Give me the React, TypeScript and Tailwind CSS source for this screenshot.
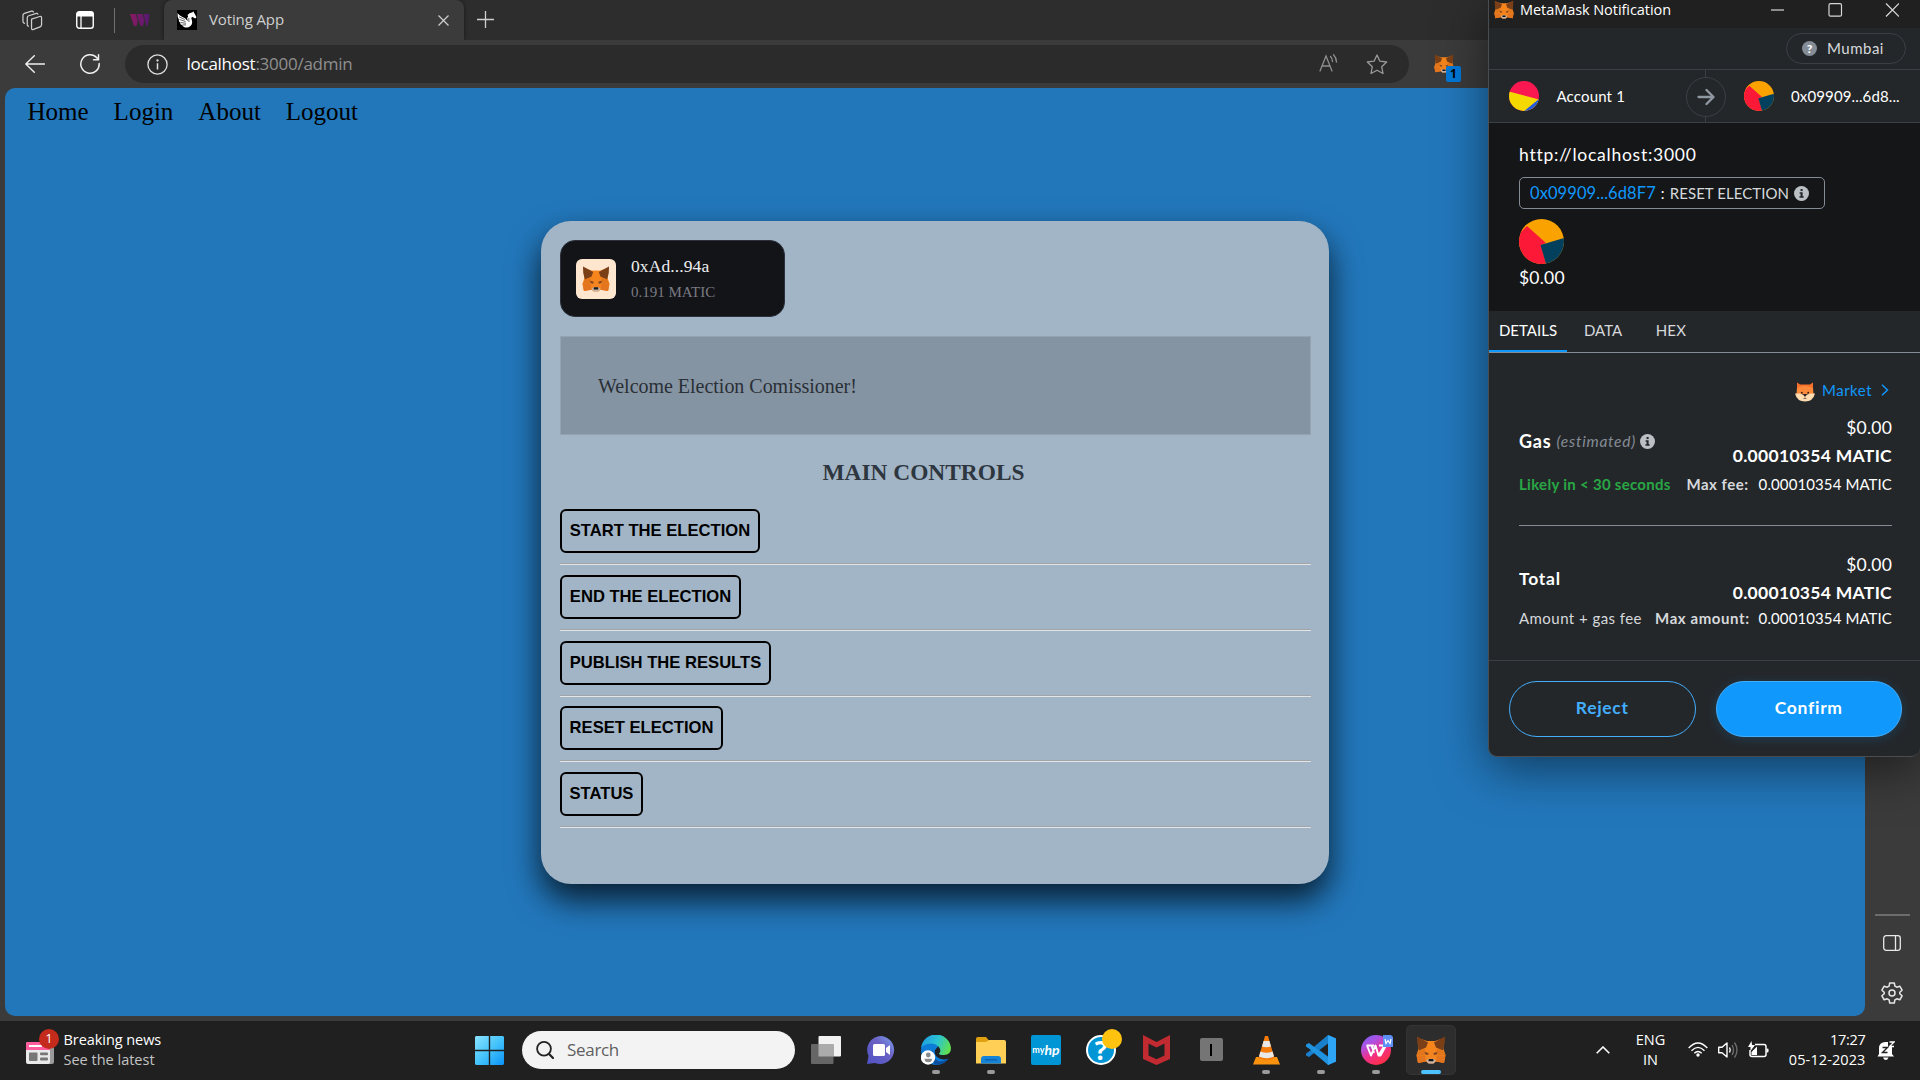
import React from "react";

const segoe = "font-['Open_Sans',sans-serif] whitespace-nowrap";
const serif = "font-['Liberation_Serif',serif] whitespace-nowrap";

function Fox({ className = "" }: { className?: string }) {
  return (
    <svg viewBox="0 0 30 28" className={className}>
      <path d="M2 2 L11 5 H19 L28 2 L27.500 13 L29.500 19 L28 27 L20 25.500 L17.500 27.500 H12.500 L10 25.500 L2 27 L0.500 19 L2.500 13 Z" fill="#f3841f" />
      <path d="M11 5 H19 L17.500 15 H12.500 Z" fill="#f6851b" />
      <path d="M1 0.500 L12 6.500 L10 11.500 L3 14.500 Q0.500 7 1 0.500 Z" fill="#7a3f17" />
      <path d="M29 0.500 L18 6.500 L20 11.500 L27 14.500 Q29.500 7 29 0.500 Z" fill="#7a3f17" />
      <path d="M3 14.500 L8.500 12.500 L11 19 L0.500 19 Z" fill="#e2761b" />
      <path d="M27 14.500 L21.500 12.500 L19 19 L29.500 19 Z" fill="#e2761b" />
      <path d="M0.500 19.500 H9 L10 25.500 L2 27 Z" fill="#e4751f" />
      <path d="M29.500 19.500 H21 L20 25.500 L28 27 Z" fill="#e4751f" />
      <path d="M8.500 16 L12.500 17 L12 19 L9.500 18.200 Z" fill="#7a4424" />
      <path d="M21.500 16 L17.500 17 L18 19 L20.500 18.200 Z" fill="#7a4424" />
      <path d="M10 24.500 L12.500 22.800 H17.500 L20 24.500 L17.500 27.500 H12.500 Z" fill="#c9b5a8" />
      <path d="M12.700 23 H17.300 L17.500 25.300 H12.500 Z" fill="#161616" />
    </svg>
  );
}

function PieAvatar({ className = "" }: { className?: string }) {
  return (
    <svg viewBox="0 0 45 45" className={className}>
      <defs>
        <clipPath id="pieClip">
          <circle cx="22.500" cy="22.500" r="22.500" />
        </clipPath>
      </defs>
      <g clipPath="url(#pieClip)">
        <rect width="45" height="45" fill="#faa300" />
        <path d="M8 7 L27 24 L22 26 L27 45 H0 V0 Z" fill="#fc1937" />
        <path d="M8 7 L0 15 V0 H10 Z" fill="#faa300" />
        <path d="M21.500 26 L45 19 V45 H27 Z" fill="#03405d" />
      </g>
    </svg>
  );
}

function InfoDot({ className = "" }: { className?: string }) {
  return (
    <svg viewBox="0 0 16 16" className={className}>
      <circle cx="8" cy="8" r="8" fill="#bbc0c5" />
      <rect x="7" y="3.200" width="2.200" height="2.200" fill="#24272a" />
      <path d="M6 6.700 H9.200 V11 H10.300 V12.500 H5.800 V11 H7 V8.200 H6 Z" fill="#24272a" />
    </svg>
  );
}

function TabStrip() {
  return (
    <div className="flex h-10 items-center bg-[#2d2d2d] text-[#cfcfcf]">
      <svg viewBox="0 0 22 22" className="ml-[22px] h-[21px] w-[21px] shrink-0" fill="none" stroke="#cfcfcf" strokeWidth="1.300" strokeLinejoin="round" strokeLinecap="round">
        <path d="M10 9.500 L18.500 6.800 Q20.500 6.200 20.500 8 V15.500 Q20.500 17 19 17.600 L12 20.300 Q10 21 10 19 Z" />
        <path d="M6.800 17 Q5.500 17 5.500 15.500 V8 Q5.500 6.500 7 6 L15 3.500 Q16.300 3.200 16.600 4.300" />
        <path d="M2.600 14 Q1 13.500 1 12 V5.500 Q1 4 2.500 3.500 L10 1.200 Q11.500 0.900 12 2" />
      </svg>
      <svg viewBox="0 0 18 18" className="ml-[33px] h-[18px] w-[18px] shrink-0" fill="none">
        <rect x="0.750" y="0.750" width="16.500" height="16.500" rx="2.500" stroke="#fff" strokeWidth="1.400" />
        <path d="M0.500 5.500 V3 Q0.500 0.500 3 0.500 H15 Q17.500 0.500 17.500 3 V5.500 Z" fill="#fff" />
        <path d="M5 5 V17" stroke="#fff" strokeWidth="1.300" />
      </svg>
      <div className="ml-5 h-[25px] w-px shrink-0 bg-[#707070]" />
      <svg viewBox="0 0 20 12" className="ml-[15px] h-3 w-5 shrink-0">
        <defs>
          <linearGradient id="tw" x1="0" x2="1">
            <stop offset="0" stopColor="#8b1a62" />
            <stop offset="1" stopColor="#55196f" />
          </linearGradient>
        </defs>
        <path d="M0 0 H5.800 L8 7 L6.500 12 H4 Z M6.800 0 H12.500 L14.500 7 L13 12 H10.500 Z M13.500 0 H19.500 L19 6 L17.500 12 H16.500 Z" fill="url(#tw)" />
      </svg>
      <div className="ml-[14px] flex h-10 w-[300px] shrink-0 items-center rounded-t-lg bg-[#3b3b3b] shadow-[0_0_4px_rgba(0,0,0,0.5)]">
        <svg viewBox="0 0 20 20" className="ml-[13px] h-5 w-5">
          <rect width="20" height="20" fill="#000" />
          <path d="M10.500 5 Q12 3 15.500 2.200 L16.500 1.200 L17 2.800 Q18 4 19.500 7.300 L18.300 8.600 L15 6.800 Q13.700 8 14.800 10 Q16 13.500 13.500 16 Q11 18.200 7.500 17.300 Q5.500 16.500 5 15 Q3 14.500 3 12.500 Q1.500 11.500 1.800 9.500 Q0.300 7.500 0.500 3 Q2.500 6 5 6.800 Q8.500 7.500 10.500 11 Q10.800 9.500 10 8 Q11.500 7 11 6 Z" fill="#fff" />
          <path d="M2 6.800 L7.800 9.500 M2.500 9.500 L8.500 11.500 M3.500 12.500 L9 13.300 M5.300 15 L9 14.800 M12 8 Q11.500 10 12 12" stroke="#000" strokeWidth="0.600" fill="none" />
        </svg>
        <span className={`${segoe} ml-[12px] flex-1 pb-[2px] text-[15px] tracking-[-0.12px]`}>Voting App</span>
        <svg viewBox="0 0 11 11" className="mr-[15.500px] mt-px h-[11px] w-[11px]" stroke="#cfcfcf" strokeWidth="1.200">
          <path d="M0.500 0.500 L10.500 10.500 M10.500 0.500 L0.500 10.500" />
        </svg>
      </div>
      <svg viewBox="0 0 17 17" className="mb-px ml-[12.500px] h-[17px] w-[17px]" stroke="#cfcfcf" strokeWidth="1.300">
        <path d="M8.500 0 V17 M0 8.500 H17" />
      </svg>
    </div>
  );
}

function Toolbar() {
  return (
    <div className="flex h-12 items-center bg-[#3b3b3b]">
      <svg viewBox="0 0 20 18" className="mb-px ml-[25px] h-[18px] w-5 shrink-0" fill="none" stroke="#f0f0f0" strokeWidth="1.400" strokeLinecap="round" strokeLinejoin="round">
        <path d="M19.500 9 H0.800 M9.300 0.700 L0.800 9 L9.300 17.300" />
      </svg>
      <svg viewBox="0 0 20 20" className="ml-[35px] h-5 w-5 shrink-0" fill="none" stroke="#f0f0f0" strokeWidth="1.500" strokeLinecap="round">
        <path d="M19.200 9.500 A9.200 9.200 0 1 1 16.800 3.800 L18.300 5.500 M18.500 0.800 V5.800 H13.500" />
      </svg>
      <div className="ml-[25px] flex h-[38px] w-[1284px] shrink-0 items-center rounded-full bg-[#2b2b2b]">
        <svg viewBox="0 0 21 21" className="ml-[22px] h-[21px] w-[21px]" fill="none" stroke="#e0e0e0" strokeWidth="1.300">
          <circle cx="10.500" cy="10.500" r="9.600" />
          <path d="M10.500 9.200 V15.500" strokeWidth="1.500" />
          <circle cx="10.500" cy="6.500" r="0.500" fill="#e0e0e0" />
        </svg>
        <span className={`${segoe} ml-[18.500px] flex-1 pb-px text-[17px] tracking-[-0.260px] text-[#8f8f8f]`}>
          <span className="text-white">localhost</span>:3000/admin
        </span>
        <svg viewBox="0 0 20 18" className="mb-[2px] mr-[27px] h-[18px] w-5" fill="none" stroke="#8f8f8f" strokeWidth="1.300" strokeLinecap="round">
          <path d="M1 17 L7 2 L13 17 M3 12 H11 M11.500 2.500 Q13.500 4.500 13.500 7.500 M14.500 0.800 Q17.500 4 17.500 8" />
        </svg>
        <svg viewBox="0 0 22 21" className="mr-[21px] h-[21px] w-[22px]" fill="none" stroke="#9a9a9a" strokeWidth="1.300" strokeLinejoin="round">
          <path d="M11 1 L13.900 7.200 L20.700 8 L15.700 12.700 L17 19.500 L11 16.200 L5 19.500 L6.300 12.700 L1.300 8 L8.100 7.200 Z" />
        </svg>
      </div>
      <div className="relative ml-[25px] h-5 w-5">
        <Fox className="h-[19px] w-5" />
        <span className="absolute left-[12px] top-[12px] flex h-4 w-[15px] items-center justify-center rounded-[2px] bg-[#0078d7] font-['Open_Sans',sans-serif] text-[12px] font-bold text-black">1</span>
      </div>
    </div>
  );
}

const controls: [string, string][] = [
  ["START THE ELECTION", "w-[200px]"],
  ["END THE ELECTION", "w-[181px]"],
  ["PUBLISH THE RESULTS", "w-[211px]"],
  ["RESET ELECTION", "w-[163px]"],
  ["STATUS", "w-[83px]"],
];

function VotingPage() {
  return (
    <div className="flex h-[928px] w-[1860px] flex-col overflow-hidden rounded-bl-[10px] rounded-br-[10px] rounded-tl-[10px] bg-[#2277bb]">
      <nav className={`${serif} flex h-[47px] gap-[25px] pl-[22.500px] text-[25px] leading-[47px] text-black`}>
        <a>Home</a>
        <a>Login</a>
        <a>About</a>
        <a>Logout</a>
      </nav>
      <main className="ml-[536px] mt-[86px] h-[663px] w-[788px] rounded-[30px] bg-[#a2b5c6] px-[19px] pt-[19px] shadow-[0_16px_32px_rgba(0,0,0,0.75)]">
        <div className="flex h-[77px] w-[225px] items-center rounded-[15px] border border-[#2b303b] bg-[#131418]">
          <div className="ml-[15px] flex h-10 w-10 items-center justify-center rounded-[6px] bg-[#ffe6cf]">
            <Fox className="h-[26px] w-[28px]" />
          </div>
          <div className={`${serif} ml-[15px]`}>
            <div className="text-[17.500px] leading-[26px] tracking-[0.100px] text-[#eeeef0]">0xAd...94a</div>
            <div className="text-[15px] leading-[26px] text-[#7a7a83]">0.191 MATIC</div>
          </div>
        </div>
        <div className={`${serif} -mr-px mt-[19px] flex h-[99px] items-center border border-[#95a3b1] bg-[#8594a3] pl-[37px] text-[20px] tracking-[-0.020px] text-[#2a3036]`}>
          <span className="mt-px">Welcome Election Comissioner!</span>
        </div>
        <h3 className={`${serif} mt-[18px] h-[38px] pr-[23px] text-center text-[23.400px] font-bold leading-[38px] text-[#2e3740]`}>MAIN CONTROLS</h3>
        <div className="-mr-px mt-[18px]">
          {controls.map(([label, width]) => (
            <div key={label} className="flex h-[65.800px] flex-col">
              <button className={`${width} h-[44px] shrink-0 rounded-[6px] border-2 border-black pt-[1px] font-['Liberation_Sans',sans-serif] text-[16.600px] font-bold whitespace-nowrap text-black`}>{label}</button>
              <div className="mt-[10px] h-[2px] shrink-0 border-t border-t-[#a0a5aa] bg-[#e2e4e6]" />
            </div>
          ))}
        </div>
      </main>
    </div>
  );
}

function EdgeSidebar() {
  return (
    <div className="flex w-[55px] flex-col items-center pt-[826px]">
      <div className="h-[2px] w-[35px] bg-[#6c6c6c]" />
      <svg viewBox="0 0 18 16" className="mr-px mt-[19px] h-4 w-[18px]" fill="none" stroke="#e8e8e8" strokeWidth="1.300">
        <rect x="0.700" y="0.700" width="16.600" height="14.600" rx="2.500" />
        <path d="M12.500 0.700 V15.300" />
      </svg>
      <svg viewBox="0 0 24 24" className="mr-px mt-[30px] h-6 w-6" fill="none" stroke="#e8e8e8" strokeWidth="1.500" strokeLinejoin="round">
        <path d="M9.700 2 H14.300 L14.900 5.100 L16.800 6.200 L19.800 5.200 L22.100 9.200 L19.800 11.200 V12.800 L22.100 14.800 L19.800 18.800 L16.800 17.800 L14.900 18.900 L14.300 22 H9.700 L9.100 18.900 L7.200 17.800 L4.200 18.800 L1.900 14.800 L4.200 12.800 V11.200 L1.900 9.200 L4.200 5.200 L7.200 6.200 L9.100 5.100 Z" />
        <circle cx="12" cy="12" r="3" />
      </svg>
    </div>
  );
}

function FeeBlock({ label, children }: { label: React.ReactNode; children: React.ReactNode }) {
  return (
    <>
      <div className="flex h-[52px] items-center justify-between">
        {label}
        <div className="text-right text-[17.500px] text-white">
          <div className="h-6 leading-6 tracking-[0.200px]">$0.00</div>
          <div className="mt-1 h-6 font-bold leading-6 tracking-[0.300px]">0.00010354 MATIC</div>
        </div>
      </div>
      {children}
    </>
  );
}

function MetaMaskWindow() {
  return (
    <section className="absolute right-0 top-0 flex h-[757px] w-[432px] flex-col overflow-hidden whitespace-nowrap rounded-b-[9px] border border-t-0 border-r-0 border-[#4a4d50] bg-[#24272a] font-['Lato',sans-serif] text-[15px] text-white shadow-[0_12px_50px_rgba(0,0,0,0.5)]">
      <header className="flex h-7 shrink-0 items-center bg-[#202020] pb-[9px]">
        <Fox className="ml-[5px] h-[19px] w-5" />
        <span className={`${segoe} ml-[6px] flex-1 text-[14.500px] tracking-[-0.060px]`}>MetaMask Notification</span>
        <svg viewBox="0 0 128 14" className="mr-[21px] h-[14px] w-[128px]" fill="none" stroke="#d8d8d8" strokeWidth="1.200">
          <path d="M0 7 H13" />
          <rect x="58" y="0.700" width="12.500" height="12.500" rx="1.500" />
          <path d="M115 0.500 L128 13.500 M128 0.500 L115 13.500" />
        </svg>
      </header>
      <div className="flex h-[42px] shrink-0 items-center justify-end border-b border-[#3b4046] pr-[14px]">
        <div className="flex h-[31px] w-[120px] items-center rounded-full border border-[#3b4046]">
          <span className="ml-[15px] flex h-[15px] w-[15px] items-center justify-center rounded-full bg-[#848c96] text-[12px] font-black text-white">?</span>
          <span className="ml-[10px] tracking-[0.500px] text-[#d6d9dc]">Mumbai</span>
        </div>
      </div>
      <div className="flex h-[53px] shrink-0 items-center border-b border-[#3b4046]">
        <svg viewBox="0 0 30 30" className="ml-5 h-[30px] w-[30px]">
          <defs>
            <clipPath id="acc">
              <circle cx="15" cy="15" r="15" />
            </clipPath>
          </defs>
          <g clipPath="url(#acc)">
            <rect width="30" height="30" fill="#fb1851" />
            <path d="M0 10.500 L30 18.500 V30 H0 Z" fill="#f5d800" />
            <path d="M30 18 L14 31 H30 Z" fill="#2459e0" />
          </g>
        </svg>
        <span className="ml-[17.500px] w-[129.500px] pt-px tracking-[0.160px]">Account 1</span>
        <div className="relative flex h-full w-10 items-center justify-center">
          <div className="absolute inset-y-0 left-[19px] w-px bg-[#3b4046]" />
          <div className="relative mt-px flex h-10 w-10 items-center justify-center rounded-full border border-[#3b4046] bg-[#24272a]">
            <svg viewBox="0 0 18 18" className="h-[18px] w-[18px]" fill="none" stroke="#9098a1" strokeWidth="2.300" strokeLinecap="round" strokeLinejoin="round">
              <path d="M1.500 9 H16 M9.500 2 L16.500 9 L9.500 16" />
            </svg>
          </div>
        </div>
        <PieAvatar className="ml-[18px] h-[30px] w-[30px]" />
        <span className="ml-[17px] tracking-[0.130px]">0x09909...6d8...</span>
      </div>
      <div className="h-[188px] shrink-0 bg-[#141618] pl-[30px] pt-[20px]">
        <div className="h-6 text-[17.500px] leading-6 tracking-[0.740px]">http://localhost:3000</div>
        <div className="mt-[10px] flex h-8 w-[306px] items-center rounded-[5px] border border-[#848c96] pl-[10px]">
          <span className="text-[16.500px] tracking-[0.080px] text-[#1098fc]">0x09909...6d8F7</span>
          <span className="ml-[5px] w-[9px] text-[15px]">:</span>
          <span className="text-[15px] tracking-[0.050px] text-[#d6d9dc]">RESET ELECTION</span>
          <InfoDot className="ml-[5px] h-[15px] w-[15px]" />
        </div>
        <PieAvatar className="mt-[10px] h-[45px] w-[45px]" />
        <div className="mt-[2px] h-6 text-[17.500px] leading-6 tracking-[0.200px]">$0.00</div>
      </div>
      <div className="flex h-[42px] shrink-0 border-b border-[#848c96] text-[#d6d9dc]">
        <span className="h-[41px] w-[78px] border-b-2 border-[#1098fc] text-center leading-[39px] text-white">DETAILS</span>
        <span className="ml-[17px] leading-[39px]">DATA</span>
        <span className="ml-[33.500px] leading-[39px] tracking-[0.200px]">HEX</span>
      </div>
      <div className="h-[307px] shrink-0 pl-[30px] pr-[28px]">
        <div className="flex h-[63px] items-center justify-end pt-[11px] text-[#1098fc]">
          <svg viewBox="0 0 20 20" className="mt-[3px] h-5 w-5">
            <path d="M2 0.500 L5 2.500 H15 L18 0.500 V12 H2 Z" fill="#f9702a" />
            <path d="M2 6 Q10 2 18 6 L18.500 12 H1.500 Z" fill="#fb8a3a" />
            <path d="M0 11.500 H5 L10 13.500 L15 11.500 H20 Q18 19.500 10 19.500 Q2 19.500 0 11.500 Z" fill="#ffdcb0" />
            <circle cx="6.800" cy="10.800" r="1" fill="#402020" />
            <circle cx="13.200" cy="10.800" r="1" fill="#402020" />
            <path d="M8.300 13 H11.700 L10 15 Z M7.800 17.200 L10 15.500 L12.200 17.200 L10 16.500 Z" fill="#402020" />
          </svg>
          <span className="ml-[7px] tracking-[0.480px]">Market</span>
          <svg viewBox="0 0 8 12" className="ml-[9px] mr-[3px] h-3 w-2" fill="none" stroke="#1098fc" strokeWidth="1.500">
            <path d="M1 0.700 L6.500 6 L1 11.300" />
          </svg>
        </div>
        <FeeBlock
          label={
            <div className="flex items-center pb-px">
              <span className="text-[18px] font-bold tracking-[0.800px]">Gas</span>
              <span className="ml-[5px] text-[15.500px] italic tracking-[0.740px] text-[#848c96]">(estimated)</span>
              <InfoDot className="ml-[4px] h-[15px] w-[15px]" />
            </div>
          }
        >
          <div className="mt-[5px] flex h-[22px] items-center">
            <span className="font-bold tracking-[0.290px] text-[#28a745]">Likely in &lt; 30 seconds</span>
            <span className="ml-auto font-bold tracking-[0.500px] text-[#d6d9dc]">Max fee:</span>
            <span className="ml-[10px] tracking-[0.100px]">0.00010354 MATIC</span>
          </div>
        </FeeBlock>
        <div className="mb-[27px] mt-[30px] h-px bg-[#848c96]" />
        <FeeBlock label={<span className="text-[17.500px] font-bold tracking-[0.750px]">Total</span>}>
          <div className="mt-[2px] flex h-[22px] items-center">
            <span className="tracking-[0.450px] text-[#d6d9dc]">Amount + gas fee</span>
            <span className="ml-auto font-bold tracking-[0.580px] text-[#d6d9dc]">Max amount:</span>
            <span className="ml-[9px] tracking-[0.100px]">0.00010354 MATIC</span>
          </div>
        </FeeBlock>
      </div>
      <footer className="flex flex-1 gap-5 border-t border-[#3b4046] pl-5 pr-[18px] pt-5 text-[17.500px] font-bold tracking-[0.700px]">
        <button className="h-14 flex-1 rounded-full border border-[#43aefc] pb-[2px] text-[#43aefc]">Reject</button>
        <button className="h-14 flex-1 rounded-full border border-[#43aefc] bg-[#1098fc] pb-[2px] text-white shadow-[0_2px_12px_rgba(16,152,252,0.2)]">Confirm</button>
      </footer>
    </section>
  );
}

function TaskIcon({ children, mark }: { children: React.ReactNode; mark?: boolean }) {
  return (
    <div className="relative flex h-[59px] w-[55px] shrink-0 items-center justify-center pb-[2px]">
      {children}
      {mark && <span className="absolute bottom-[6px] left-[23.500px] h-1 w-2 rounded-full bg-[#9a9a9a]" />}
    </div>
  );
}

function Taskbar() {
  return (
    <footer className="flex h-[59px] items-center bg-[#202020]">
      <div className="relative ml-[26px] mt-[3px] h-[28px] w-[28px]">
        <svg viewBox="0 0 28 22" className="mt-[4px] h-[22px] w-7">
          <rect x="20" y="4" width="8" height="18" rx="2" fill="#9a9a9a" />
          <rect width="24" height="22" rx="2" fill="#e9e9e9" />
          <path d="M0 8 V2 Q0 0 2 0 H24 V8 Z" fill="#ff5c9d" />
          <rect x="3" y="3" width="13" height="2" fill="#fff" />
          <rect x="3" y="10.500" width="8.500" height="8.500" rx="1" fill="#777" />
          <rect x="14" y="10.500" width="8" height="2.800" rx="1" fill="#777" />
          <rect x="14" y="15.500" width="8" height="3" rx="1" fill="#777" />
        </svg>
        <span className="absolute left-[13px] top-[-9px] flex h-5 w-5 items-center justify-center rounded-full bg-[#c42b1c] font-['Open_Sans',sans-serif] text-[13px] text-white">1</span>
      </div>
      <div className={`${segoe} ml-[9.500px] w-[411.500px] pb-[2px] text-[14.500px] leading-5`}>
        <div className="tracking-[-0.060px] text-white">Breaking news</div>
        <div className="text-[#c3c3c3]">See the latest</div>
      </div>
      <svg viewBox="0 0 29 29" className="mb-px h-[29px] w-[29px] shrink-0">
        <defs>
          <linearGradient id="win" x1="0" y1="0" x2="1" y2="1">
            <stop offset="0" stopColor="#8be2ff" />
            <stop offset="0.500" stopColor="#45c4fb" />
            <stop offset="1" stopColor="#0a92f7" />
          </linearGradient>
        </defs>
        <path d="M1 0 H13.800 V13.800 H0 V1 Z M15.200 0 H28 L29 1 V13.800 H15.200 Z M0 15.200 H13.800 V29 H1 L0 28 Z M15.200 15.200 H29 V28 L28 29 H15.200 Z" fill="url(#win)" />
      </svg>
      <div className="mb-px ml-[18px] flex h-[38px] w-[273px] shrink-0 items-center rounded-full bg-[#f3f3f3]">
        <svg viewBox="0 0 18 18" className="ml-[14px] h-[18px] w-[18px]" fill="none" stroke="#222" strokeWidth="1.800" strokeLinecap="round">
          <circle cx="8" cy="7.800" r="6.900" />
          <path d="M12.800 12.800 L17 17" strokeWidth="2.200" />
        </svg>
        <span className={`${segoe} ml-[13px] text-[17px] tracking-[-0.310px] text-[#5f5f5f]`}>Search</span>
      </div>
      <div className="ml-[3.500px] flex">
        <TaskIcon>
          <svg viewBox="0 0 30 28" className="h-7 w-[30px]">
            <rect x="7.500" y="0" width="22.500" height="20.500" rx="1" fill="#f2f2f2" />
            <rect x="0" y="8" width="22.500" height="20" rx="1" fill="#666" />
            <rect x="7.500" y="8" width="15" height="12.500" fill="#ababab" />
          </svg>
        </TaskIcon>
        <TaskIcon>
          <svg viewBox="0 0 28 28" className="h-7 w-7">
            <defs>
              <linearGradient id="chat" x1="0" y1="1" x2="1" y2="0">
                <stop offset="0" stopColor="#4f52c4" />
                <stop offset="0.600" stopColor="#6b62c4" />
                <stop offset="1" stopColor="#7ba5f2" />
              </linearGradient>
            </defs>
            <path d="M14 0 A14 14 0 1 1 8 27 L0 28 L1.500 20 A14 14 0 0 1 14 0 Z" fill="url(#chat)" />
            <rect x="6" y="8" width="12" height="12" rx="1.500" fill="#fff" />
            <path d="M19 12 L23 9 V19 L19 16 Z" fill="#fff" />
          </svg>
        </TaskIcon>
        <TaskIcon mark>
          <svg viewBox="0 0 30 30" className="h-[30px] w-[30px]">
            <defs>
              <linearGradient id="edgeTop" x1="0" x2="1" y1="0.300" y2="0.600">
                <stop offset="0" stopColor="#1e9de0" />
                <stop offset="0.500" stopColor="#2bc3d2" />
                <stop offset="1" stopColor="#62e24a" />
              </linearGradient>
            </defs>
            <path d="M15 0 A15 15 0 0 0 15 30 Q23 30 27.500 23.500 Q21 26 16 22 Q13 19 14 15 L20 8 Z" fill="#0c7cd6" />
            <path d="M12 15 Q11 23 17 26 Q22 27 27.500 23.500 Q23 30 15 30 Q9 26 9.500 19 Z" fill="#0b4f9e" />
            <path d="M0.200 12.500 A15 15 0 0 1 30 13 Q30 20 23 20 Q18 20 18 18.500 Q20 17 19 14 Q17 9 10.500 8.500 Q4 8.500 0.200 12.500 Z" fill="url(#edgeTop)" />
            <circle cx="7" cy="22.500" r="7.200" fill="#fff" />
            <circle cx="7.300" cy="20" r="2.400" fill="#8a8a8a" />
            <path d="M3.500 23.700 H11 Q11 27.300 7.300 27.300 Q3.500 27.300 3.500 23.700 Z" fill="#8a8a8a" />
          </svg>
        </TaskIcon>
        <TaskIcon mark>
          <svg viewBox="0 0 30 27" className="mt-[1px] h-[27px] w-[30px]">
            <path d="M0 2 Q0 0 2 0 H10 L13 3.500 V10 H0 Z" fill="#e0a010" />
            <path d="M0 5 H10 L13 3 H28 Q30 3 30 5 V26.500 H0 Z" fill="#ffd055" />
            <path d="M5 26.500 V22 Q5 19 8 19 H22 Q25 19 25 22 V26.500 Z" fill="#1583d8" />
            <path d="M9 22.800 H21" stroke="#0b5ca5" strokeWidth="1.200" />
          </svg>
        </TaskIcon>
        <TaskIcon>
          <div className="flex h-[30px] w-[30px] items-center justify-center rounded-[2px] bg-[#0096d6] font-['Lato',sans-serif] text-white">
            <span className="text-[9px] font-bold">my</span>
            <span className="text-[14px] font-bold italic leading-none">hp</span>
          </div>
        </TaskIcon>
        <TaskIcon>
          <span className="flex h-[30px] w-[30px] items-center justify-center rounded-full border-2 border-white bg-[#0096d6] font-['Open_Sans',sans-serif] text-[26px] font-bold leading-none text-white">?</span>
          <span className="absolute left-[28px] top-[8px] h-5 w-5 rounded-full bg-[#ffc20e]" />
        </TaskIcon>
        <TaskIcon>
          <svg viewBox="0 0 27 30" className="h-[30px] w-[27px]">
            <path d="M0 0 L13.500 7 L27 0 V24 L13.500 30 L0 24 Z M5.500 8.500 V20.500 L13.500 24.300 L21.500 20.500 V8.500 L13.500 12.500 Z" fill="#c02a30" fillRule="evenodd" />
          </svg>
        </TaskIcon>
        <TaskIcon>
          <div className="flex h-[23px] w-[23px] items-center justify-center rounded-[2px] bg-[#757575]">
            <div className="h-3 w-[2px] bg-black" />
          </div>
        </TaskIcon>
        <TaskIcon mark>
          <svg viewBox="0 0 27 30" className="h-[30px] w-[27px]">
            <path d="M3 22 H24 L27 29.500 H0 Z" fill="#f9920f" />
            <path d="M12 1 H15 L21.500 23 Q13.500 27.500 5.500 23 Z" fill="#f47a0b" />
            <path d="M10.600 6 H16.400 L18 11.500 Q13.500 13 9 11.500 Z" fill="#e8e8e8" />
            <path d="M7.400 16.500 Q13.500 19 19.600 16.500 L21 21.500 Q13.500 25 6 21.500 Z" fill="#e8e8e8" />
          </svg>
        </TaskIcon>
        <TaskIcon mark>
          <svg viewBox="0 0 30 30" className="h-[30px] w-[30px]">
            <path d="M22 0 L30 3.500 V26.500 L22 30 L8.500 17.800 L3 22 L0 20.500 V18.500 L22 0 Z" fill="#1a7fca" />
            <path d="M0 9.500 L3 8 L22.500 22.800 V30 L0 11.500 Z" fill="#2194e0" />
            <path d="M22 0 L30 3.500 V26.500 L22 30 Z" fill="#2ea6f5" />
            <path d="M22 8.500 V21.500 L13.500 15 Z" fill="#202020" />
            <path d="M0 12 L5 15 L0 18.300 Z" fill="#202020" />
          </svg>
        </TaskIcon>
        <TaskIcon mark>
          <svg viewBox="0 0 32 32" className="mb-[1px] ml-[2px] h-8 w-8">
            <defs>
              <linearGradient id="wps" x1="0.100" y1="0" x2="0.700" y2="1">
                <stop offset="0" stopColor="#7a62fa" />
                <stop offset="0.300" stopColor="#b050e0" />
                <stop offset="0.600" stopColor="#f0308c" />
                <stop offset="1" stopColor="#ff3040" />
              </linearGradient>
            </defs>
            <circle cx="15" cy="17" r="15" fill="url(#wps)" />
            <path d="M5.500 12.500 H13 M6 12.500 L10 22.500 L14.500 12.500 L17.500 22.500 L23.500 12.500 M10.500 12.500 L13 20 M18 12.500 H25 L19.500 22.500 H17" fill="none" stroke="#fff" strokeWidth="1.900" strokeLinejoin="round" />
            <path d="M22 2 H30 L32 4 V14 H22 Z" fill="#5c8ff5" />
            <path d="M24 6 L25 10.500 L27 7.500 L29 10.500 L30 6" fill="none" stroke="#fff" strokeWidth="1.200" />
          </svg>
        </TaskIcon>
        <div className="relative flex h-[59px] w-[55px] items-center justify-center pb-[2px]">
          <div className="flex h-[50px] w-[50px] items-center justify-center rounded-[5px] border border-[#343434] bg-[#2d2d2d]">
            <Fox className="h-[28px] w-[30px]" />
          </div>
          <span className="absolute bottom-[6px] left-[17.500px] h-1 w-5 rounded-full bg-[#4cc2ff]" />
        </div>
      </div>
      <svg viewBox="0 0 14 8" className="mb-px ml-[137px] h-2 w-[14px]" fill="none" stroke="#fff" strokeWidth="1.600">
        <path d="M0.700 7.200 L7 1 L13.300 7.200" />
      </svg>
      <div className={`${segoe} ml-[22px] w-[38px] pb-px text-center text-[14.500px] leading-5 text-white`}>
        <div>ENG</div>
        <div>IN</div>
      </div>
      <svg viewBox="0 0 20 15" className="mb-[2px] ml-[18px] h-[15px] w-5" fill="none" stroke="#fff" strokeWidth="1.400">
        <path d="M0.700 6 Q10 -4 19.300 6 M3.500 8.800 Q10 2 16.500 8.800 M6.300 11.300 Q10 7.800 13.700 11.300" />
        <circle cx="10" cy="13" r="1.700" fill="#fff" stroke="none" />
      </svg>
      <svg viewBox="0 0 21 18" className="mb-[2px] ml-[10px] h-[18px] w-[21px]" fill="none" stroke="#fff" strokeWidth="1.400">
        <path d="M0.700 6.300 H4 L9 2 V16 L4 11.700 H0.700 Z" strokeLinejoin="round" />
        <path d="M11.500 6.500 Q13 9 11.500 11.500" />
        <path d="M14 4 Q17 9 14 14 M16.500 1.500 Q21.500 9 16.500 16.500" stroke="#6b6b6b" />
      </svg>
      <svg viewBox="0 0 21 17" className="mb-[3px] ml-[9px] h-[17px] w-[21px]">
        <path d="M7 3.500 H16 Q18 3.500 18 5.500 V13.500 Q18 15.500 16 15.500 H4 Q2 15.500 2 13.500 V9" fill="none" stroke="#fff" strokeWidth="1.500" />
        <rect x="18.500" y="7.500" width="2" height="4" rx="1" fill="#fff" />
        <path d="M3.500 0 L0 6 H2.500 V10 L7 4 H4 Z" fill="#fff" />
        <path d="M3.500 11 L9 5.500 V14 H3.500 Z" fill="#fff" />
      </svg>
      <div className={`${segoe} ml-[12.500px] w-[84.500px] pb-[2px] text-right text-[14.500px] leading-5 text-white`}>
        <div className="tracking-[-0.300px]">17:27</div>
        <div className="tracking-[0.100px]">05-12-2023</div>
      </div>
      <svg viewBox="0 0 18 19" className="mb-px ml-[11px] h-[19px] w-[18px]">
        <path d="M2 13 V7.500 Q2 1 8.500 1 H11 V6 H15 V13 L17 15.500 H0.500 Z" fill="#fff" />
        <path d="M6 16.500 H11.500 Q10.500 19 8.800 19 Q7 19 6 16.500 Z" fill="#fff" />
        <path d="M12.500 1 H17 L12.500 5.500 H17" fill="none" stroke="#fff" strokeWidth="1.300" />
        <path d="M5.500 6.500 H10.500 L5.500 11.500 H10.500" fill="none" stroke="#202020" strokeWidth="1.400" />
      </svg>
    </footer>
  );
}

export default function App() {
  return (
    <div className="relative flex h-[1080px] w-[1920px] flex-col overflow-hidden bg-[#3b3b3b]">
      <TabStrip />
      <Toolbar />
      <div className="flex h-[933px] pl-[5px]">
        <VotingPage />
        <EdgeSidebar />
      </div>
      <Taskbar />
      <MetaMaskWindow />
    </div>
  );
}
